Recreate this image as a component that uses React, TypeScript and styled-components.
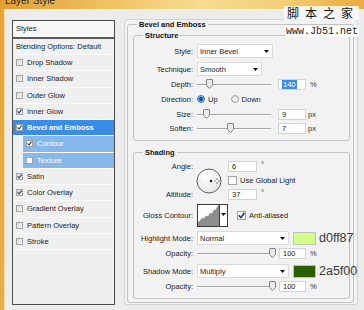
import React from "react";
import styled, { createGlobalStyle } from "styled-components";

const GlobalStyle = createGlobalStyle`
  html, body { margin: 0; padding: 0; background: #ececec; }
  body { font-family: "Liberation Sans", Arial, sans-serif; }
`;

const Window = styled.div`
  position: relative;
  width: 364px;
  height: 310px;
  overflow: hidden;
  display: flex;
  flex-direction: column;
  background: linear-gradient(180deg, #e6a235, #e9ae46);
  font-family: "Liberation Sans", Arial, sans-serif;
  font-size: 7.5px;
  color: #1e1e1e;
`;

const TitleBar = styled.div`
  height: 9px;
  flex: none;
  overflow: hidden;
  padding-left: 5px;
  background: linear-gradient(90deg, #e39d33 0%, #efc264 30%, #f7dc92 55%, #f3cf78 78%, #e8a93f 100%);
`;

const Title = styled.div`
  margin-top: -5px;
  font-size: 10px;
  line-height: 12px;
  color: #2b2b2b;
`;

const Body = styled.div`
  flex: 1;
  margin-left: 4px;
  display: flex;
  align-items: flex-start;
  padding: 10px 0 0 7px;
  background: #ececec;
  border-top: 1px solid #f7f0dc;
  border-left: 1px solid #f4dca6;
`;

const StylesList = styled.div`
  box-sizing: border-box;
  flex: none;
  width: 103px;
  height: 285px;
  border: 1px solid #4b4b4b;
  background: #efefef;
`;

const ListHeader = styled.div`
  height: 16px;
  line-height: 16px;
  padding-left: 3px;
  background: #f7f7f7;
  border-bottom: 2px solid #5c5c5c;
`;

const BlendRow = styled.div`
  height: 15px;
  line-height: 15px;
  padding-left: 3px;
  background: #f1f1f1;
  border-bottom: 1px solid #fbfbfb;
`;

const StyleRow = styled.div<{ $active?: boolean; $sub?: boolean }>`
  height: 15.25px;
  display: flex;
  align-items: center;
  gap: 4px;
  padding-left: 3px;
  margin-left: ${(p) => (p.$sub ? 10 : 0)}px;
  border-bottom: 1px solid #fafafa;
  background: ${(p) => (p.$active ? "#3a8de6" : p.$sub ? "#86b8ec" : "transparent")};
  color: ${(p) => (p.$active || p.$sub ? "#fff" : "#222")};
  font-weight: ${(p) => (p.$active ? "bold" : "normal")};
`;

const Box = styled.span<{ $size?: number; $white?: boolean }>`
  box-sizing: border-box;
  flex: none;
  width: ${(p) => p.$size ?? 7}px;
  height: ${(p) => p.$size ?? 7}px;
  border: 1px solid #a4a4a4;
  background: ${(p) => (p.$white ? "#fdfdfd" : "linear-gradient(135deg, #d9d9d9, #f8f8f8)")};
  display: inline-flex;
  align-items: center;
  justify-content: center;
`;

const Tick = ({ size = 7 }: { size?: number }) => (
  <svg width={size - 2} height={size - 2} viewBox="0 0 5 5">
    <path d="M0.6 2.4 L2 4 L4.6 0.6" fill="none" stroke="#1c3566" strokeWidth="1.1" />
  </svg>
);

const CheckBox = ({ on, size, white }: { on?: boolean; size?: number; white?: boolean }) => (
  <Box $size={size} $white={white}>{on && <Tick size={size} />}</Box>
);

const RightPanel = styled.div`
  box-sizing: border-box;
  flex: none;
  margin: -1px 0 0 9px;
  width: 234px;
  height: 286px;
  border: 1px solid #d3d3d3;
  border-radius: 3px;
  background: #f2f2f2;
  padding: 0 3px 0 2px;
`;

const Group = styled.fieldset<{ $mt?: number; $pt?: number; $pr?: number; $pl?: number; $pb?: number }>`
  margin: ${(p) => p.$mt ?? 0}px 0 0 0;
  padding: ${(p) => p.$pt ?? 0}px ${(p) => p.$pr ?? 0}px ${(p) => p.$pb ?? 5}px ${(p) => p.$pl ?? 0}px;
  border: 1px solid #c3c3c3;
  border-radius: 3px;
  min-width: 0;
`;

const Legend = styled.legend<{ $ml: number }>`
  margin-left: ${(p) => p.$ml}px;
  padding: 0 2px;
  font-weight: bold;
  font-size: 7.5px;
  line-height: 9px;
  color: #111;
`;

const Row = styled.div<{ $mt?: number; $h?: number }>`
  display: flex;
  align-items: center;
  height: ${(p) => p.$h ?? 14}px;
  margin-top: ${(p) => p.$mt ?? 0}px;
  white-space: nowrap;
`;

const Label = styled.span`
  flex: none;
  width: 59px;
  padding-right: 4px;
  text-align: right;
  color: #222;
`;

const Select = styled.div<{ $w: number }>`
  box-sizing: border-box;
  flex: none;
  width: ${(p) => p.$w}px;
  height: 14px;
  background: #fff;
  border: 1px solid #dadada;
  display: flex;
  align-items: center;
  justify-content: space-between;
  padding: 0 3px 0 2px;
`;

const Arrow = () => (
  <svg width="5" height="3" viewBox="0 0 5 3">
    <path d="M0 0h5L2.5 3z" fill="#111" />
  </svg>
);

const Track = styled.div<{ $w: number }>`
  position: relative;
  flex: none;
  width: ${(p) => p.$w}px;
  height: 10px;
  &::before {
    content: "";
    position: absolute;
    left: 0;
    right: 0;
    top: 5px;
    height: 1px;
    background: #a3a3a3;
    box-shadow: 0 1px 0 #fff;
  }
`;

const ThumbMark = styled.svg<{ $x: number }>`
  position: absolute;
  top: 0;
  left: ${(p) => p.$x - 3}px;
`;

const Slider = ({ w, at }: { w: number; at: number }) => (
  <Track $w={w}>
    <ThumbMark $x={at} width="7" height="10" viewBox="0 0 7 10">
      <path d="M1 0.5h5a0.5 0.5 0 0 1 0.5 0.5v5.5l-3 3l-3-3V1a0.5 0.5 0 0 1 0.5-0.5z" fill="#eaeaea" stroke="#858585" />
    </ThumbMark>
  </Track>
);

const Field = styled.div<{ $w: number; $ml: number }>`
  box-sizing: border-box;
  flex: none;
  width: ${(p) => p.$w}px;
  height: 11px;
  margin-left: ${(p) => p.$ml}px;
  background: #fff;
  border: 1px solid #d2d2d2;
  padding-left: 3px;
  line-height: 9px;
  color: #222;
`;

const Selected = styled.span`
  background: #3d8de4;
  color: #fff;
  padding: 0 1px;
`;

const Unit = styled.span<{ $ml?: number; $top?: boolean }>`
  margin-left: ${(p) => p.$ml ?? 3}px;
  color: #333;
  align-self: ${(p) => (p.$top ? "flex-start" : "center")};
  margin-top: ${(p) => (p.$top ? 1 : 0)}px;
`;

const Radio = styled.span<{ $on?: boolean }>`
  box-sizing: border-box;
  flex: none;
  width: 8px;
  height: 8px;
  border-radius: 50%;
  border: 1px solid ${(p) => (p.$on ? "#3f78bd" : "#a6a6a6")};
  background: ${(p) =>
    p.$on
      ? "radial-gradient(circle, #1b4c98 0 1.6px, #6aa3e2 2.2px, #d7e7f8 100%)"
      : "radial-gradient(circle, #fafafa, #dcdcdc)"};
`;

const RadioText = styled.span<{ $mr?: number }>`
  margin-left: 3px;
  margin-right: ${(p) => p.$mr ?? 0}px;
  color: #222;
`;

const AngleBlock = styled.div`
  display: grid;
  grid-template-columns: 63px 31px auto;
  grid-template-rows: 14px 14px 14px;
  align-items: center;
  margin-top: 1px;
  white-space: nowrap;
`;

const Dial = styled.svg`
  grid-column: 2;
  grid-row: 1 / span 3;
  margin: 2px 0 0 -1px;
`;

const Cell = styled.div`
  grid-column: 3;
  display: flex;
  align-items: center;
  height: 14px;
`;

const ContourBox = styled.div`
  box-sizing: border-box;
  flex: none;
  display: flex;
  width: 31px;
  height: 23px;
  border: 1px solid #3c3c3c;
  background: #fff;
`;

const ContourDrop = styled.div`
  flex: 1;
  display: flex;
  justify-content: center;
  padding-top: 8px;
  border-left: 1px solid #3c3c3c;
`;

const CheckLabel = styled.span<{ $ml: number }>`
  display: inline-flex;
  align-items: center;
  gap: 3px;
  margin-left: ${(p) => p.$ml}px;
  color: #222;
`;

const Swatch = styled.span<{ $color: string }>`
  box-sizing: border-box;
  flex: none;
  width: 23px;
  height: 13px;
  margin-left: 4px;
  background: ${(p) => p.$color};
  border: 1px solid #c2c2c2;
`;

const HexNote = styled.span`
  margin-left: 3px;
  font-size: 12.5px;
  line-height: 14px;
  color: #3a3a3a;
`;

const Watermark = styled.div`
  position: absolute;
  left: 284px;
  top: 6px;
  display: flex;
  flex-direction: column;
  align-items: flex-start;
  white-space: nowrap;
`;

const SiteName = styled.div`
  font-family: "Noto Sans CJK SC", "Noto Sans", sans-serif;
  font-size: 12px;
  line-height: 14px;
  letter-spacing: 6px;
  padding-left: 3px;
  color: #111;
  background: rgba(250, 250, 250, 0.85);
`;

const SiteUrl = styled.div`
  margin: 6px 0 0 1px;
  font-family: "Liberation Mono", "Courier New", monospace;
  font-size: 10px;
  line-height: 11px;
  padding: 0 1px;
  color: #1a1a1a;
  background: #fff;
`;

const styleItems = [
  { name: "Drop Shadow", on: false },
  { name: "Inner Shadow", on: false },
  { name: "Outer Glow", on: false },
  { name: "Inner Glow", on: true },
  { name: "Bevel and Emboss", on: true, active: true },
  { name: "Contour", on: true, sub: true },
  { name: "Texture", on: false, sub: true },
  { name: "Satin", on: true },
  { name: "Color Overlay", on: true },
  { name: "Gradient Overlay", on: false },
  { name: "Pattern Overlay", on: false },
  { name: "Stroke", on: false },
];

const App = () => {
  return (
    <>
      <GlobalStyle />
      <Window>
        <TitleBar>
          <Title>Layer Style</Title>
        </TitleBar>
        <Body>
          <StylesList>
            <ListHeader>Styles</ListHeader>
            <BlendRow>Blending Options: Default</BlendRow>
            {styleItems.map((item) => (
              <StyleRow key={item.name} $active={item.active} $sub={item.sub}>
                <CheckBox on={item.on} white={item.active || item.sub} />
                <span>{item.name}</span>
              </StyleRow>
            ))}
          </StylesList>

          <RightPanel>
            <Group $pl={5} $pr={3} $pb={3}>
              <Legend $ml={4}>Bevel and Emboss</Legend>

              <Group $mt={2} $pt={4} $pb={5}>
                <Legend $ml={9}>Structure</Legend>
                <Row>
                  <Label>Style:</Label>
                  <Select $w={76}>
                    <span>Inner Bevel</span>
                    <Arrow />
                  </Select>
                </Row>
                <Row $mt={4}>
                  <Label>Technique:</Label>
                  <Select $w={65}>
                    <span>Smooth</span>
                    <Arrow />
                  </Select>
                </Row>
                <Row $mt={1}>
                  <Label>Depth:</Label>
                  <Slider w={74} at={12} />
                  <Field $w={28} $ml={7}>
                    <Selected>140</Selected>
                  </Field>
                  <Unit $ml={4}>%</Unit>
                </Row>
                <Row $mt={1}>
                  <Label>Direction:</Label>
                  <Radio $on />
                  <RadioText $mr={13}>Up</RadioText>
                  <Radio />
                  <RadioText>Down</RadioText>
                </Row>
                <Row $mt={1}>
                  <Label>Size:</Label>
                  <Slider w={74} at={9} />
                  <Field $w={28} $ml={7}>9</Field>
                  <Unit $ml={2}>px</Unit>
                </Row>
                <Row>
                  <Label>Soften:</Label>
                  <Slider w={74} at={33} />
                  <Field $w={28} $ml={7}>7</Field>
                  <Unit $ml={2}>px</Unit>
                </Row>
              </Group>

              <Group $mt={7} $pt={1} $pb={5}>
                <Legend $ml={9}>Shading</Legend>
                <AngleBlock>
                  <Label style={{ gridRow: 1 }}>Angle:</Label>
                  <Dial width="26" height="26" viewBox="0 0 26 26">
                    <defs>
                      <radialGradient id="dialFill" cx="40%" cy="35%" r="70%">
                        <stop offset="0" stopColor="#ffffff" />
                        <stop offset="1" stopColor="#e4e4e4" />
                      </radialGradient>
                    </defs>
                    <circle cx="13" cy="13" r="12" fill="url(#dialFill)" stroke="#5e5e5e" />
                    <circle cx="15" cy="13" r="1.2" fill="#111" />
                    <g fill="#333">
                      <rect x="20.5" y="10.5" width="1" height="1" />
                      <rect x="20.5" y="14.5" width="1" height="1" />
                      <rect x="18.5" y="12.5" width="1" height="1" />
                      <rect x="22.5" y="12.5" width="1" height="1" />
                    </g>
                  </Dial>
                  <Cell style={{ gridRow: 1 }}>
                    <Field $w={29} $ml={0}>6</Field>
                    <Unit $ml={4} $top>°</Unit>
                  </Cell>
                  <Cell style={{ gridRow: 2 }}>
                    <CheckLabel $ml={0}>
                      <CheckBox size={9} white />
                      Use Global Light
                    </CheckLabel>
                  </Cell>
                  <Label style={{ gridRow: 3 }}>Altitude:</Label>
                  <Cell style={{ gridRow: 3 }}>
                    <Field $w={29} $ml={0}>37</Field>
                    <Unit $ml={4} $top>°</Unit>
                  </Cell>
                </AngleBlock>

                <Row $mt={3} $h={23}>
                  <Label>Gloss Contour:</Label>
                  <ContourBox>
                    <svg width="21" height="21" viewBox="0 0 21 21">
                      <path
                        d="M0 21V17L2 15.5L4 13L6 13.5L8 10.5L10 11.5L12 8L14 8.5L16 4.5L17.5 5L19.5 1L21 0V21Z"
                        fill="#8d8d8d"
                      />
                    </svg>
                    <ContourDrop>
                      <svg width="5" height="3" viewBox="0 0 5 3">
                        <path d="M0 0h5L2.5 3z" fill="#111" />
                      </svg>
                    </ContourDrop>
                  </ContourBox>
                  <CheckLabel $ml={9}>
                    <CheckBox on size={9} white />
                    Anti-aliased
                  </CheckLabel>
                </Row>

                <Row $mt={4}>
                  <Label>Highlight Mode:</Label>
                  <Select $w={92}>
                    <span>Normal</span>
                    <Arrow />
                  </Select>
                  <Swatch $color="#d0ff87" />
                  <HexNote>d0ff87</HexNote>
                </Row>
                <Row $mt={1}>
                  <Label>Opacity:</Label>
                  <Slider w={78} at={75} />
                  <Field $w={27} $ml={4}>100</Field>
                  <Unit $ml={4}>%</Unit>
                </Row>
                <Row $mt={4}>
                  <Label>Shadow Mode:</Label>
                  <Select $w={92}>
                    <span>Multiply</span>
                    <Arrow />
                  </Select>
                  <Swatch $color="#2a5f00" />
                  <HexNote>2a5f00</HexNote>
                </Row>
                <Row $mt={1}>
                  <Label>Opacity:</Label>
                  <Slider w={78} at={75} />
                  <Field $w={27} $ml={4}>100</Field>
                  <Unit $ml={4}>%</Unit>
                </Row>
              </Group>
            </Group>
          </RightPanel>
        </Body>

        <Watermark>
          <SiteName>脚本之家</SiteName>
          <SiteUrl>www.Jb51.net</SiteUrl>
        </Watermark>
      </Window>
    </>
  );
};

export default App;
